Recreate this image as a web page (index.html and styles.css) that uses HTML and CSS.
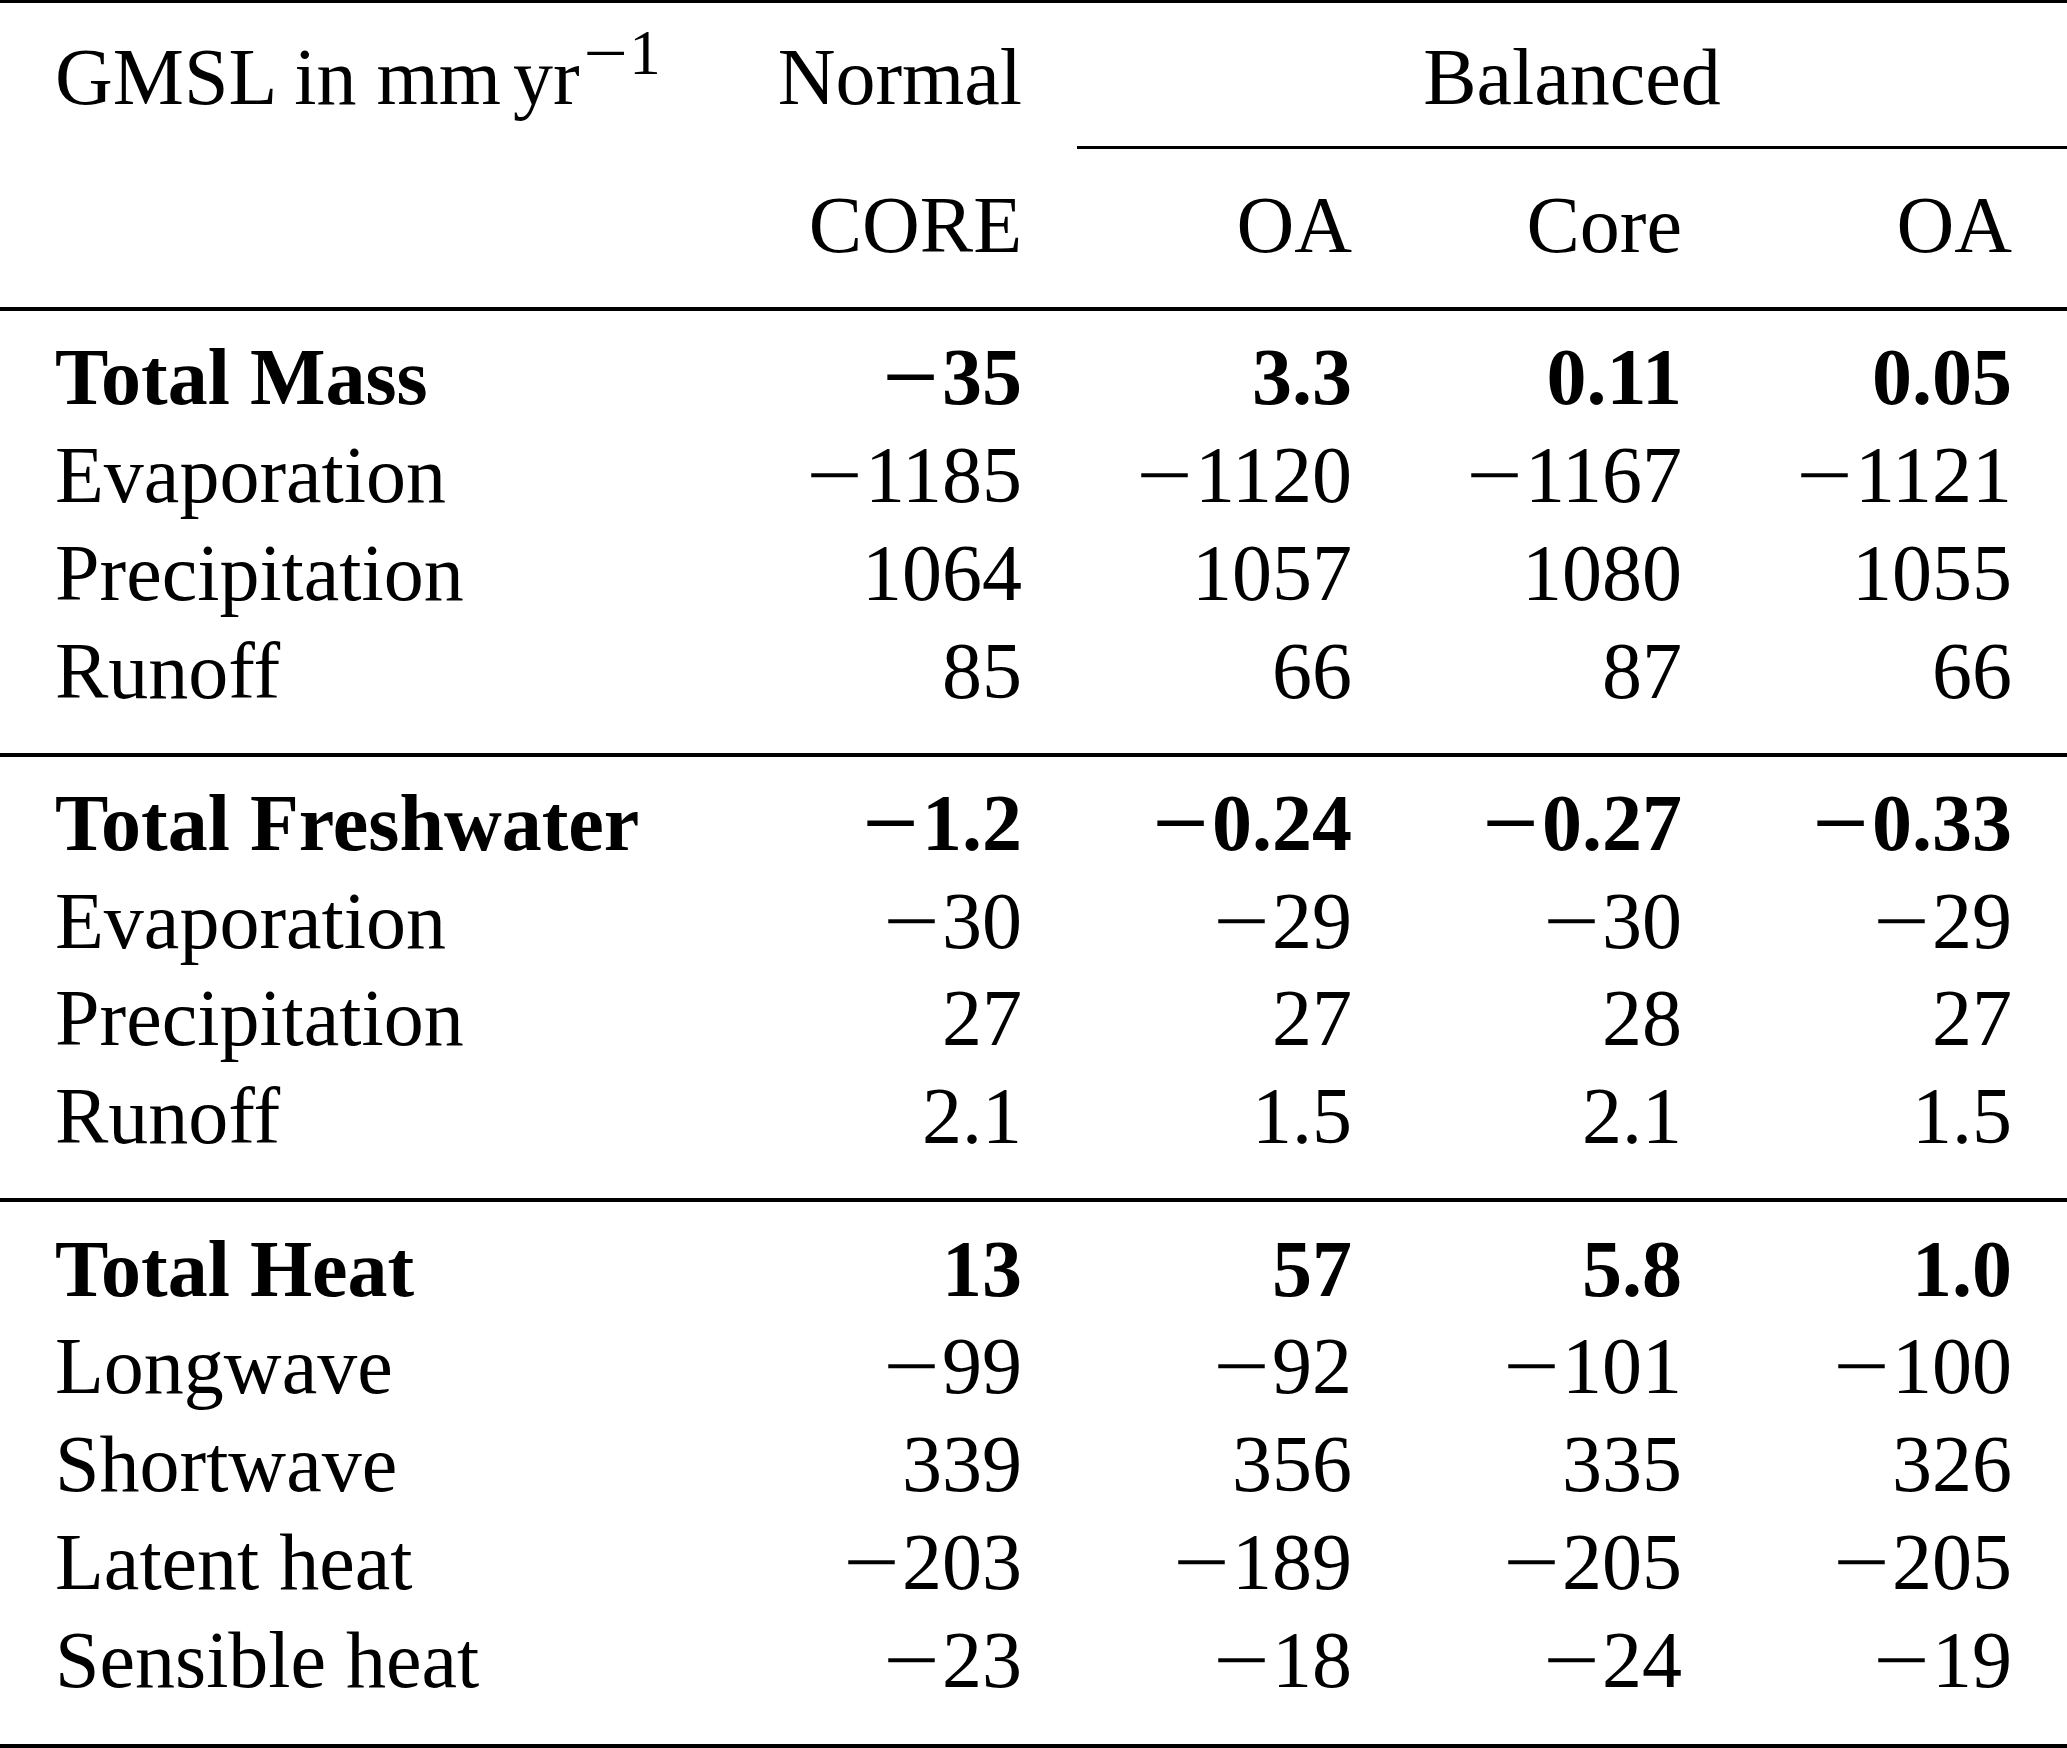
FILE: index.html
```html
<!DOCTYPE html>
<html lang="en">
<head>
<meta charset="utf-8">
<title>GMSL budget table</title>
<link rel="stylesheet" href="styles.css">
</head>
<body>
<table class="budget">
  <colgroup>
    <col class="c-label">
    <col class="c-num">
    <col class="c-num">
    <col class="c-num">
    <col class="c-end">
  </colgroup>
  <thead>
    <tr class="h1">
      <th class="lab">GMSL in <span class="unit">mm yr</span><span class="sup"><span class="m">−</span>1</span></th>
      <th class="num">Normal</th>
      <th class="bal" colspan="3"><div class="bal-in">Balanced</div></th>
    </tr>
    <tr class="h2">
      <th class="lab"></th>
      <th class="num">CORE</th>
      <th class="num">OA</th>
      <th class="num">Core</th>
      <th class="num end">OA</th>
    </tr>
  </thead>
  <tbody>
    <tr class="first total">
      <td class="lab">Total Mass</td>
      <td class="num"><span class="m">−</span>35</td>
      <td class="num">3.3</td>
      <td class="num">0.11</td>
      <td class="num end">0.05</td>
    </tr>
    <tr>
      <td class="lab">Evaporation</td>
      <td class="num"><span class="m">−</span>1185</td>
      <td class="num"><span class="m">−</span>1120</td>
      <td class="num"><span class="m">−</span>1167</td>
      <td class="num end"><span class="m">−</span>1121</td>
    </tr>
    <tr>
      <td class="lab">Precipitation</td>
      <td class="num">1064</td>
      <td class="num">1057</td>
      <td class="num">1080</td>
      <td class="num end">1055</td>
    </tr>
    <tr class="last">
      <td class="lab">Runoff</td>
      <td class="num">85</td>
      <td class="num">66</td>
      <td class="num">87</td>
      <td class="num end">66</td>
    </tr>
  </tbody>
  <tbody>
    <tr class="first total">
      <td class="lab">Total Freshwater</td>
      <td class="num"><span class="m">−</span>1.2</td>
      <td class="num"><span class="m">−</span>0.24</td>
      <td class="num"><span class="m">−</span>0.27</td>
      <td class="num end"><span class="m">−</span>0.33</td>
    </tr>
    <tr>
      <td class="lab">Evaporation</td>
      <td class="num"><span class="m">−</span>30</td>
      <td class="num"><span class="m">−</span>29</td>
      <td class="num"><span class="m">−</span>30</td>
      <td class="num end"><span class="m">−</span>29</td>
    </tr>
    <tr>
      <td class="lab">Precipitation</td>
      <td class="num">27</td>
      <td class="num">27</td>
      <td class="num">28</td>
      <td class="num end">27</td>
    </tr>
    <tr class="last">
      <td class="lab">Runoff</td>
      <td class="num">2.1</td>
      <td class="num">1.5</td>
      <td class="num">2.1</td>
      <td class="num end">1.5</td>
    </tr>
  </tbody>
  <tbody class="final">
    <tr class="first total">
      <td class="lab">Total Heat</td>
      <td class="num">13</td>
      <td class="num">57</td>
      <td class="num">5.8</td>
      <td class="num end">1.0</td>
    </tr>
    <tr>
      <td class="lab">Longwave</td>
      <td class="num"><span class="m">−</span>99</td>
      <td class="num"><span class="m">−</span>92</td>
      <td class="num"><span class="m">−</span>101</td>
      <td class="num end"><span class="m">−</span>100</td>
    </tr>
    <tr>
      <td class="lab">Shortwave</td>
      <td class="num">339</td>
      <td class="num">356</td>
      <td class="num">335</td>
      <td class="num end">326</td>
    </tr>
    <tr>
      <td class="lab">Latent heat</td>
      <td class="num"><span class="m">−</span>203</td>
      <td class="num"><span class="m">−</span>189</td>
      <td class="num"><span class="m">−</span>205</td>
      <td class="num end"><span class="m">−</span>205</td>
    </tr>
    <tr class="last">
      <td class="lab">Sensible heat</td>
      <td class="num"><span class="m">−</span>23</td>
      <td class="num"><span class="m">−</span>18</td>
      <td class="num"><span class="m">−</span>24</td>
      <td class="num end"><span class="m">−</span>19</td>
    </tr>
  </tbody>
</table>
</body>
</html>
```

FILE: styles.css
```css
html, body {
  margin: 0;
  padding: 0;
  background: #ffffff;
}

body {
  font-family: "Liberation Serif", "Times New Roman", serif;
  color: #000000;
}

.budget {
  width: 2067px;
  table-layout: fixed;
  border-collapse: separate;
  border-spacing: 0;
  font-size: 80px;
}

.c-label { width: 720px; }
.c-num { width: 330px; }
.c-end { width: 357px; }

.budget th,
.budget td {
  padding: 0;
  line-height: 97.8px;
  font-weight: normal;
  white-space: nowrap;
  vertical-align: top;
}

.lab {
  text-align: left;
  padding-left: 55px !important;
}

.num {
  text-align: right;
  padding-right: 28px !important;
}

.num.end {
  padding-right: 55px !important;
}

/* header row 1 */
.h1 th {
  border-top: 3px solid #000;
  padding-top: 26px;
  padding-bottom: 22.4px;
}

.h1 th.bal {
  padding: 0;
}

.bal-in {
  margin-left: 27px;
  padding-top: 26px;
  padding-bottom: 19.4px;
  border-bottom: 3px solid #000;
  text-align: center;
}

.unit {
  word-spacing: -8px;
}

.sup {
  display: inline-block;
  font-size: 63px;
  line-height: 40px;
  vertical-align: 30px;
  margin-left: 8px;
}

.sup .m {
  margin-right: 6px;
}

/* header row 2 */
.h2 th {
  padding-top: 27.8px;
  padding-bottom: 32.2px;
  border-bottom: 4px solid #000;
}

/* body groups */
.first td {
  padding-top: 18.2px;
}

.last td {
  padding-bottom: 32.3px;
  border-bottom: 4px solid #000;
}

.final .last td {
  padding-bottom: 34.6px;
}

.total td {
  font-weight: bold;
}

/* math minus: wider than the font's own glyph */
.m {
  display: inline-block;
  transform: scaleX(1.25);
  margin-right: 8px;
}
```
